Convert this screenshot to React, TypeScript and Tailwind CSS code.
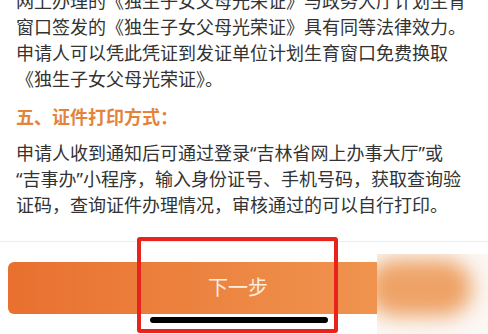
export default function App() {
  return (
    <div
      className="relative flex flex-col w-[488px] h-[334px] overflow-hidden bg-white text-[#333333]"
      style={{ fontFamily: '"Noto Sans", "Noto Sans CJK SC", sans-serif' }}
    >
      <div className="flex flex-col px-4 -mt-[12px] text-[18px] leading-[26px]">
        <p className="whitespace-nowrap">
          网上办理的《独生子女父母光荣证》与政务大厅计划生育
          <br />
          窗口签发的《独生子女父母光荣证》具有同等法律效力。
          <br />
          申请人可以凭此凭证到发证单位计划生育窗口免费换取
          <br />
          《独生子女父母光荣证》。
        </p>

        <h2 className="pt-3 pb-2.5 font-bold text-[#e3843a]">五、证件打印方式：</h2>

        <p className="whitespace-nowrap">
          申请人收到通知后可通过登录“吉林省网上办事大厅”或
          <br />
          “吉事办”小程序，输入身份证号、手机号码，获取查询验
          <br />
          证码，查询证件办理情况，审核通过的可以自行打印。
        </p>
      </div>

      <div className="flex flex-col gap-5 pt-[23px]">
        <div className="h-px bg-[#ececec]" />
        <div className="flex pl-2 pr-5">
          <button className="flex-1 h-[52px] rounded-md bg-gradient-to-r from-[#e9702f] to-[#f09c56] text-[20px] text-[#fdeee2]">
            下一步
          </button>
        </div>
      </div>

      {/* red highlight box */}
      <div className="absolute left-[137px] top-[237px] w-[201px] h-[96px] rounded-[3px] border-[4px] border-[#e8231b]" />

      {/* home indicator */}
      <div className="absolute left-[150px] top-[317px] w-[178px] h-[6px] rounded-full bg-black" />

      {/* blurred watermark */}
      <div className="absolute left-[377px] top-[254px] w-[111px] h-[80px] bg-[#fbf7f3] overflow-hidden">
        <div className="absolute left-[-10px] top-[6px] w-[105px] h-[56px] rounded-full bg-[#eea266] blur-[10px]" />
      </div>
    </div>
  )
}
